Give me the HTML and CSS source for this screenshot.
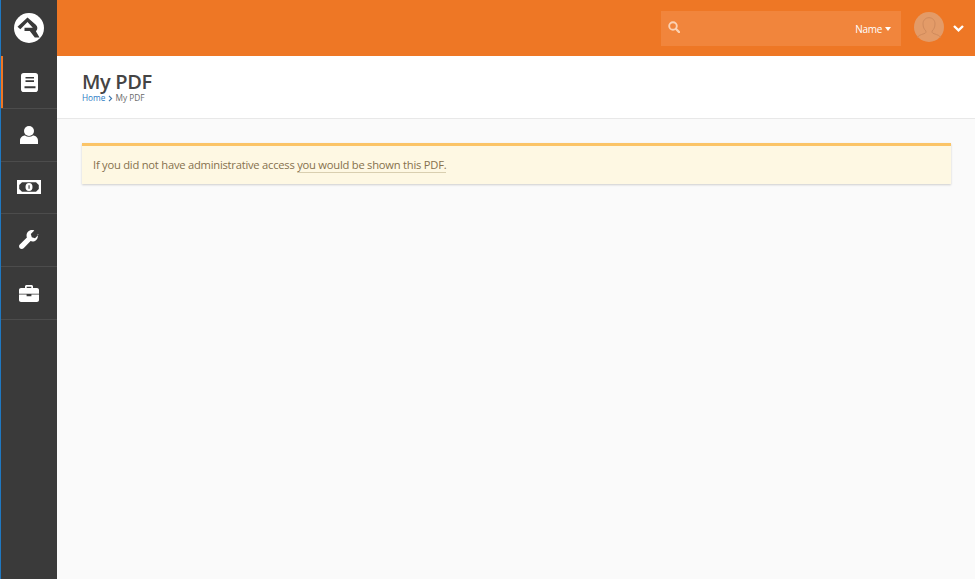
FILE: index.html
```html
<!DOCTYPE html>
<html lang="en">
<head>
<meta charset="utf-8">
<title>My PDF</title>
<link rel="stylesheet" href="styles.css">
</head>
<body>
<div class="app">
  <nav class="sidebar">
    <a class="brand">
      <svg class="logo" viewBox="0 0 30 30" width="30" height="30"><circle cx="15" cy="15" r="15" fill="#fff"/><path d="M3.500 13.800 13.500 4.500l8.300 7.200c2 1.700 2.200 4.700.1 6.500l3.600 6.300H20.800l-5-6.500H10.500v-3.300h8.300L13.500 9 6.300 16.300z" fill="#3a3a3a"/></svg>
    </a>
    <ul class="nav">
      <li class="nav-item active">
        <svg viewBox="0 0 17 19" width="17" height="19"><path d="M2.800 0h11.400A2.800 2.800 0 0 1 17 2.800v13.400a2.800 2.800 0 0 1-2.800 2.800H2.800A2.800 2.800 0 0 1 0 16.200V2.800A2.800 2.800 0 0 1 2.800 0zM4.500 4v1.600h8.500V4zM4.500 7.300v1.700h8.500V7.300zM3.500 13.300v2h11v-2z" fill="#fff" fill-rule="evenodd"/></svg>
      </li>
      <li class="nav-item">
        <svg viewBox="0 0 18 18" width="18" height="18"><circle cx="9" cy="5" r="5" fill="#fff"/><path d="M0 18v-3.200C0 11.800 2.400 9.600 5 9.600c1.200.8 2.500 1.200 4 1.200s2.800-.4 4-1.200c2.600 0 5 2.200 5 5.200V18z" fill="#fff"/></svg>
      </li>
      <li class="nav-item">
        <svg viewBox="0 0 24 14" width="24" height="14"><path d="M0 0h24v14H0zM5 2.200 2.200 5v4L5 11.800h14L21.800 9V5L19 2.200z" fill="#fff" fill-rule="evenodd"/><ellipse cx="12" cy="7" rx="3.500" ry="3.900" fill="#fff"/><path d="M11.500 5.200h1.100v3.600h-1.100z" fill="#3a3a3a"/></svg>
      </li>
      <li class="nav-item">
        <svg viewBox="0 0 20 20" width="20" height="20"><path d="M19.500 4.800 16 8.200l-3.200-1-1-3.200L15.300.5C13-.4 10.500.2 9 1.800 7.500 3.400 7.200 5.500 7.900 7.400L.8 14.500c-1 1-1 2.600 0 3.700 1.100 1.100 2.700 1.100 3.800 0l7-7.100c1.900.7 4.100.3 5.600-1.200 1.600-1.500 2.100-3.900 1.300-6.100z" fill="#fff"/></svg>
      </li>
      <li class="nav-item">
        <svg viewBox="0 0 20 17" width="20" height="17"><path d="M6 3V1.500C6 .7 6.700 0 7.500 0h5c.8 0 1.500.7 1.500 1.500V3h4c1.100 0 2 .9 2 2v3.700H0V5c0-1.100.9-2 2-2zM7.700 1.700V3h4.600V1.700zM0 9.400h7.600v1.800h4.800V9.400H20V15c0 1.100-.9 2-2 2H2c-1.100 0-2-.9-2-2z" fill="#fff" fill-rule="evenodd"/></svg>
      </li>
    </ul>
  </nav>
  <div class="main">
    <header class="topbar">
      <div class="search">
        <svg class="search-icon" viewBox="0 0 12 12" width="12" height="12"><circle cx="5" cy="5" r="3.800" fill="none" stroke="#fbd2b4" stroke-width="1.900"/><path d="m7.800 7.800 3.300 3.300" stroke="#fbd2b4" stroke-width="2.200" stroke-linecap="round"/></svg>
        <span class="search-filter">Name</span>
        <span class="caret"></span>
      </div>
      <div class="avatar">
        <svg viewBox="0 0 30 30" width="30" height="30"><circle cx="15" cy="15" r="15" fill="#e39b68"/><path d="M3.500 25.500c.8-1.800 2.800-2.700 6.500-3.800 1.800-.5 2.200-1.600 1.800-2.800-1.600-1.400-2.800-4-2.800-7C9 8.200 11.500 5.700 15 5.700s6 2.500 6 6.200c0 3-1.200 5.600-2.800 7-.4 1.200 0 2.300 1.800 2.800 3.700 1.100 5.700 2 6.500 3.800" fill="none" stroke="#cf8a5c" stroke-width="1"/></svg>
      </div>
      <svg class="chevron" viewBox="0 0 11 7" width="11" height="7"><path d="M1 1l4.500 4.300L10 1" fill="none" stroke="#fff" stroke-width="2.400"/></svg>
    </header>
    <section class="page-title">
      <h1>My PDF</h1>
      <div class="crumbs"><a class="crumb-link">Home</a><svg class="crumb-sep" viewBox="0 0 5 7" width="5" height="7"><path d="m1 .8 2.600 2.700L1 6.200" fill="none" stroke="#3d78b0" stroke-width="1.200"/></svg><span>My PDF</span></div>
    </section>
    <section class="content">
      <div class="alert">If you did not have administrative access <a class="alert-link">you would be shown this PDF.</a></div>
    </section>
  </div>
</div>
</body>
</html>
```

FILE: styles.css
```css
* { box-sizing: border-box; }
html, body { margin: 0; height: 100%; }
body { font-family: "Open Sans", sans-serif; background: #fafafa; color: #3a3a3a; overflow: hidden; }
.app { display: flex; height: 579px; }
.sidebar { width: 57px; flex: none; background: #3a3a3a; border-left: 1px solid #1f78c1; }
.brand { height: 56px; display: flex; align-items: center; justify-content: center; }
.nav { list-style: none; margin: 0; padding: 0; }
.nav-item { height: 52.800px; display: flex; align-items: center; justify-content: center; border-bottom: 1px solid #4c4c4c; }
.nav-item.active { box-shadow: inset 2px 0 0 #ee7624; padding-top: 2px; }
.main { flex: 1; min-width: 0; display: flex; flex-direction: column; }
.topbar { height: 56px; background: #ee7725; display: flex; align-items: center; justify-content: flex-end; padding-right: 11px; }
.search { width: 240px; height: 35px; background: #f1853c; display: flex; align-items: center; padding: 0 10px 0 7px; margin-right: 13px; margin-top: 1px; }
.search-icon { margin-right: auto; margin-bottom: 3px; }
.search-filter { font-size: 10px; font-weight: 500; letter-spacing: -0.3px; color: #fff; }
.caret { width: 0; height: 0; border: 3.500px solid transparent; border-top: 4px solid #fff; border-bottom: 0; margin-left: 3px; }
.avatar { width: 30px; height: 30px; margin-right: 9px; margin-bottom: 2px; }
.avatar svg { display: block; }
.chevron { display: block; }
.page-title { height: 63px; background: #fff; border-bottom: 1px solid #e8e8e8; padding: 15px 25px 0; }
.page-title h1 { margin: 0; font-size: 20px; line-height: 21px; font-weight: 600; letter-spacing: -0.35px; color: #444; }
.crumbs { font-size: 8.300px; line-height: 12px; color: #6a6a6a; display: flex; align-items: center; }
.crumb-link { color: #2a7bc4; }
.crumb-sep { margin: 0 2px 0 3px; }
.content { padding: 24px 24px 0 25px; }
.alert { height: 41px; background: #fef8e3; border-top: 3px solid #fbc467; box-shadow: 0 1px 2px rgba(0,0,0,.18); padding: 11px 11px; font-size: 11.200px; letter-spacing: -0.235px; line-height: 16px; color: #86714d; }
.alert-link { border-bottom: 1px solid #d9cfb0; }
```
